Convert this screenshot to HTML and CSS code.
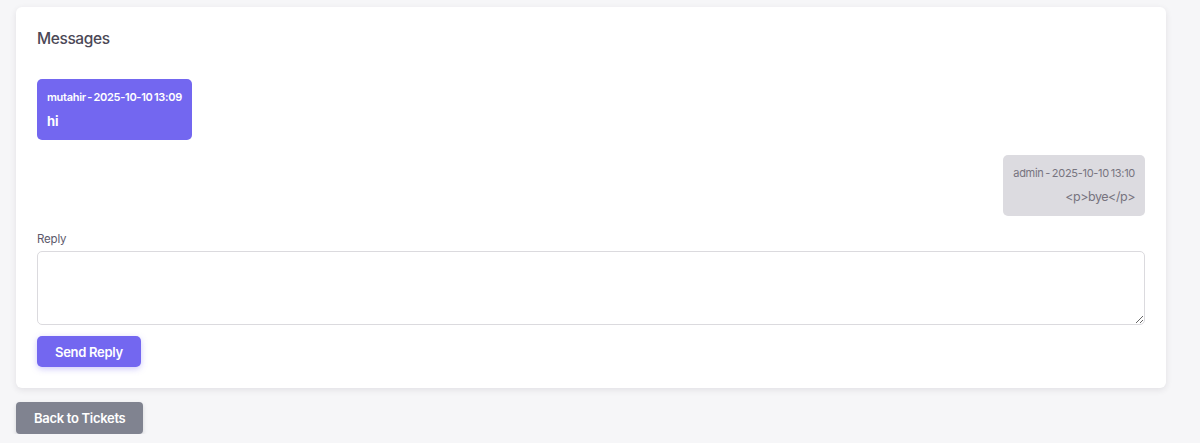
FILE: index.html
```html
<!DOCTYPE html>
<html>
<head>
<meta charset="utf-8">
<link rel="stylesheet" href="styles.css">
</head>
<body>
<div class="page">
  <div class="card">
    <h5 class="card-title">Messages</h5>
    <div class="messages">
      <div class="msg msg-user">
        <div class="msg-meta">mutahir - 2025-10-10 13:09</div>
        <div class="msg-body">hi</div>
      </div>
      <div class="msg msg-admin">
        <div class="msg-meta">admin - 2025-10-10 13:10</div>
        <div class="msg-body">&lt;p&gt;bye&lt;/p&gt;</div>
      </div>
    </div>
    <form class="reply-form">
      <label class="reply-label" for="reply">Reply</label>
      <textarea id="reply" class="reply-input"></textarea>
      <button type="button" class="btn btn-primary">Send Reply</button>
    </form>
  </div>
  <button type="button" class="btn btn-secondary">Back to Tickets</button>
</div>
</body>
</html>
```

FILE: styles.css
```css
* { box-sizing: border-box; }
html, body { margin: 0; padding: 0; }
body {
  background: #f6f6f8;
  font-family: Inter, "Noto Sans", sans-serif;
  color: #6f6b7d;
}
.page {
  padding: 7px 34px 0 16px;
  display: flex;
  flex-direction: column;
  align-items: flex-start;
  gap: 14px;
}
.card {
  width: 100%;
  background: #fff;
  border-radius: 6px;
  box-shadow: 0 2px 6px rgba(47, 43, 61, 0.10);
  padding: 21px;
}
.card-title {
  margin: 0;
  font-size: 15.5px;
  line-height: 22px;
  font-weight: 500;
  letter-spacing: -0.4px;
  color: #4b4856;
}
.messages {
  margin-top: 29px;
  display: flex;
  flex-direction: column;
  gap: 15px;
}
.msg {
  border-radius: 5px;
  padding: 10px 10px 11px 10px;
}
.msg-user {
  align-self: flex-start;
  background: #7367f0;
  color: #fff;
}
.msg-admin {
  align-self: flex-end;
  background: #dcdbe0;
  color: #77747f;
  text-align: right;
}
.msg-meta {
  font-size: 11px;
  line-height: 16px;
  letter-spacing: -0.3px;
  word-spacing: -1px;
}
.msg-user .msg-meta { font-weight: 600; }
.msg-admin .msg-meta { font-weight: 400; }
.msg-body {
  margin-top: 8px;
  line-height: 16px;
  font-size: 13px;
}
.msg-user .msg-body { font-weight: 700; }
.msg-admin .msg-body { font-weight: 400; font-size: 12.5px; letter-spacing: -0.45px; }
.reply-label {
  font-size: 11.5px;
  line-height: 18px;
  letter-spacing: -0.2px;
  color: #5d596c;
}
.reply-form {
  margin-top: 14px;
  display: flex;
  flex-direction: column;
  align-items: flex-start;
}
.reply-input {
  margin-top: 3px;
  width: 100%;
  height: 74px;
  border: 1px solid #dbdade;
  border-radius: 5px;
  font-family: inherit;
  resize: vertical;
}
.btn {
  border: none;
  border-radius: 5px;
  font-family: Inter, "Noto Sans", sans-serif;
  font-size: 13px;
  font-weight: 600;
  letter-spacing: -0.3px;
  color: #fff;
  height: 31px;
  padding: 0 18px;
  cursor: pointer;
}
.btn-primary {
  margin-top: 11px;
  background: #7367f0;
  box-shadow: 0 2px 6px rgba(115, 103, 240, 0.35);
}
.btn-secondary {
  background: #808390;
  height: 32px;
  border-radius: 4px;
  box-shadow: 0 2px 4px rgba(128, 131, 144, 0.3);
}
```
